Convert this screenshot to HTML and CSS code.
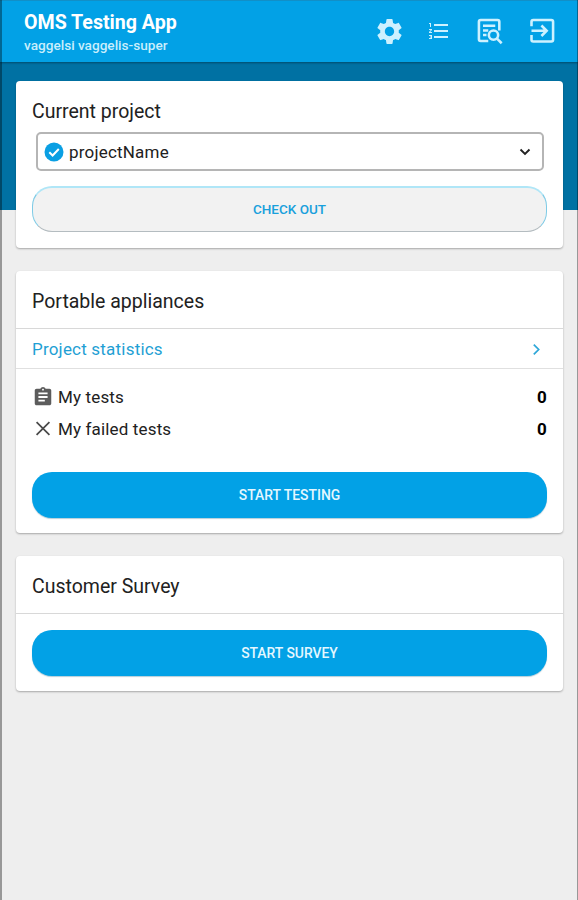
FILE: index.html
```html
<!DOCTYPE html>
<html lang="en">
<head>
    <meta charset="UTF-8">
    <meta name="viewport" content="width=device-width, initial-scale=1.0">
    <title>OMS Testing App</title>
    <link rel="stylesheet" href="styles.css">
</head>
<body>
    <div class="app">
        <header class="toolbar">
            <div class="toolbar-title">
                <h1>OMS Testing App</h1>
                <p>vaggelsi vaggelis-super</p>
            </div>
            <nav class="toolbar-actions">
                <svg class="icon-settings" viewBox="0 0 24 24"><path d="M19.14 12.94c.04-.3.06-.61.06-.94 0-.32-.02-.64-.07-.94l2.03-1.58c.18-.14.23-.41.12-.61l-1.92-3.32c-.12-.22-.37-.29-.59-.22l-2.39.96c-.5-.38-1.03-.7-1.62-.94l-.36-2.54c-.04-.24-.24-.41-.48-.41h-3.84c-.24 0-.43.17-.47.41l-.36 2.54c-.59.24-1.13.57-1.62.94l-2.39-.96c-.22-.08-.47 0-.59.22L2.74 8.87c-.12.21-.08.47.12.61l2.03 1.58c-.05.3-.09.63-.09.94s.02.64.07.94l-2.03 1.58c-.18.14-.23.41-.12.61l1.92 3.32c.12.22.37.29.59.22l2.39-.96c.5.38 1.03.7 1.62.94l.36 2.54c.05.24.24.41.48.41h3.84c.24 0 .44-.17.47-.41l.36-2.54c.59-.24 1.13-.56 1.62-.94l2.39.96c.22.08.47 0 .59-.22l1.92-3.32c.12-.22.07-.47-.12-.61l-2.01-1.58zM12 15.6c-1.98 0-3.6-1.62-3.6-3.6s1.62-3.6 3.6-3.6 3.6 1.62 3.6 3.6-1.62 3.6-3.6 3.6z"/></svg>
                <svg class="icon-list" viewBox="0 0 24 24"><path d="M2 17h2v.5H3v1h1v.5H2v1h3v-4H2v1zm1-9h1V4H2v1h1v3zm-1 3h1.800L2 13.100v.9h3v-1H3.200L5 10.900V10H2v1zm5-6v2h14V5H7zm0 14h14v-2H7v2zm0-6h14v-2H7v2z"/></svg>
                <svg class="icon-search" viewBox="0 0 24 24" fill="none" stroke="currentColor" stroke-width="2.200"><path d="M10.500 20.500H4Q2.500 20.500 2.500 19V4Q2.500 2.500 4 2.500H18.500Q20 2.500 20 4V11.500M6 7.500H16.500M6 11.500H10.500M6 15.500H9"/><circle cx="15" cy="15.500" r="4"/><path d="M18 18.500L22 22.500"/></svg>
                <svg class="icon-exit" viewBox="0 0 24 24" fill="none" stroke="currentColor" stroke-width="2.200"><path d="M3 8V4Q3 2.500 4.500 2.500H20Q21.500 2.500 21.500 4V19.500Q21.500 21 20 21H4.500Q3 21 3 19.500V15.500M3 11.800H16M11.500 7.300L16 11.800L11.500 16.300"/></svg>
            </nav>
        </header>

        <main class="content">
            <section class="card card-project">
                <h2>Current project</h2>
                <div class="select">
                    <svg class="icon-check" viewBox="0 0 20 20"><circle cx="10" cy="10" r="9.500" fill="#0a9fe3"/><path d="M5.300 10.300L8.600 13.500L14.800 7" fill="none" stroke="#fff" stroke-width="2"/></svg>
                    <span>projectName</span>
                    <svg class="icon-down" viewBox="0 0 12 12"><path d="M1.500 3.500L6 8L10.500 3.500" fill="none" stroke="#222" stroke-width="1.900"/></svg>
                </div>
                <button class="btn btn-outline">CHECK OUT</button>
            </section>

            <section class="card">
                <h2 class="card-header">Portable appliances</h2>
                <a class="link-row">
                    <span>Project statistics</span>
                    <svg class="icon-right" viewBox="0 0 12 12"><path d="M3.500 1.500L8 6L3.500 10.500" fill="none" stroke="#2ea7d8" stroke-width="1.600"/></svg>
                </a>
                <div class="stats">
                    <div class="stat">
                        <svg viewBox="0 0 24 24"><path fill="#5c5c5c" d="M19 3h-4.180C14.400 1.840 13.300 1 12 1s-2.400.84-2.820 2H5c-1.100 0-2 .9-2 2v14c0 1.100.9 2 2 2h14c1.100 0 2-.9 2-2V5c0-1.100-.9-2-2-2zm-7 0c.55 0 1 .45 1 1s-.45 1-1 1-1-.45-1-1 .45-1 1-1zm2 14H7v-2h7v2zm3-4H7v-2h10v2zm0-4H7V7h10v2z"/></svg>
                        <span>My tests</span>
                        <strong>0</strong>
                    </div>
                    <div class="stat">
                        <svg viewBox="0 0 24 24"><path d="M5 4.500L19 18.500M19 4.500L5 18.500" fill="none" stroke="#4a4a4a" stroke-width="1.900"/></svg>
                        <span>My failed tests</span>
                        <strong>0</strong>
                    </div>
                </div>
                <button class="btn btn-primary">START TESTING</button>
            </section>

            <section class="card">
                <h2 class="card-header">Customer Survey</h2>
                <button class="btn btn-primary">START SURVEY</button>
            </section>
        </main>
    </div>
</body>
</html>
```
FILE: styles.css
```css
* {
    box-sizing: border-box;
}

body {
    margin: 0;
    font-family: Roboto, sans-serif;
    color: #212121;
    background-color: #eee;
}

h1, h2, p {
    margin: 0;
}

.app {
    position: relative;
    min-height: 100vh;
    background: linear-gradient(#0071a3 210px, #eee 210px);
}

/* thin frame lines on both sides of the window */
.app::before, .app::after {
    content: '';
    position: absolute;
    top: 0;
    bottom: 0;
    width: 2px;
    background-color: rgba(0, 0, 0, 0.36);
}

.app::before {
    left: 0;
}

.app::after {
    right: 0;
    width: 1px;
}

.toolbar {
    display: flex;
    justify-content: space-between;
    height: 62px;
    padding: 10px 22px 0 24px;
    color: #fff;
    background-color: #02a1e6;
    border-top: 1px solid #128fc7;
    box-shadow: 0 1px 2px rgba(0, 0, 0, 0.35);
}

.toolbar h1 {
    font-size: 19.6px;
    line-height: 23px;
    font-weight: 700;
}

.toolbar p {
    font-size: 13.6px;
    line-height: 23px;
    font-weight: 500;
    color: #c9eefc;
}

.toolbar-actions {
    display: flex;
    align-items: center;
    height: 40px;
    color: #cdf1ff;
}

.toolbar-actions svg {
    flex: none;
}

.icon-settings {
    width: 31px;
    height: 31px;
    margin-right: 22px;
    fill: currentColor;
}

.icon-list {
    width: 24px;
    height: 24px;
    margin-right: 25px;
    fill: currentColor;
}

.icon-search {
    width: 28px;
    height: 28px;
    margin-right: 24px;
}

.icon-exit {
    width: 28px;
    height: 28px;
}

.content {
    display: flex;
    flex-direction: column;
    gap: 23px;
    padding: 19px 15px 0 16px;
}

.card {
    display: flex;
    flex-direction: column;
    padding-bottom: 15px;
    background-color: #fff;
    border-radius: 4px;
    box-shadow: 0 1px 2px rgba(0, 0, 0, 0.3);
}

.card h2 {
    font-size: 19.5px;
    line-height: 24px;
    font-weight: 400;
}

.card-project {
    padding: 19px 0 16px;
}

.card-project h2 {
    padding: 0 16px;
}

.card .card-header {
    padding: 19px 16px 14px;
    border-bottom: 1px solid #d8d8d8;
}

.select {
    display: flex;
    align-items: center;
    height: 39px;
    margin: 8px 19px 15px 20px;
    padding: 0 11px 0 6px;
    font-size: 17px;
    letter-spacing: 0.2px;
    border: 2px solid #b5b5b5;
    border-radius: 5px;
}

.select span {
    flex: 1;
    margin-left: 5px;
}

.icon-check {
    width: 20px;
    height: 20px;
}

.icon-down {
    width: 12px;
    height: 12px;
}

.btn {
    height: 46px;
    margin: 0 16px;
    padding: 0 0 1px;
    font-family: inherit;
    font-size: 13.5px;
    font-weight: 500;
    border: none;
    border-radius: 20px;
}

.btn-outline {
    padding-bottom: 2px;
    color: #18a0dc;
    background-color: #f2f2f2;
    border: 1px solid #7fcbe6;
    border-top: 2px solid #b0e6f7;
    border-bottom-color: #b4bcc0;
}

.btn-primary {
    font-size: 13.9px;
    color: #e4f7ff;
    background-color: #02a1e6;
    box-shadow: 0 1px 1px rgba(0, 90, 130, 0.3);
}

.card-header + .btn {
    margin-top: 16px;
}

.link-row {
    display: flex;
    justify-content: space-between;
    align-items: center;
    height: 40px;
    padding: 1px 20px 0 16px;
    font-size: 17px;
    letter-spacing: 0.2px;
    color: #1f9fd4;
    border-bottom: 1px solid #e0e0e0;
}

.icon-right {
    width: 13px;
    height: 13px;
}

.stats {
    padding: 12px 16px 27px;
}

.stat {
    display: flex;
    align-items: center;
    height: 32px;
    font-size: 17px;
    letter-spacing: 0.15px;
}

.stat svg {
    width: 22px;
    height: 22px;
}

.stat span {
    flex: 1;
    margin-left: 4px;
}

.stat strong {
    color: #000;
}
```
